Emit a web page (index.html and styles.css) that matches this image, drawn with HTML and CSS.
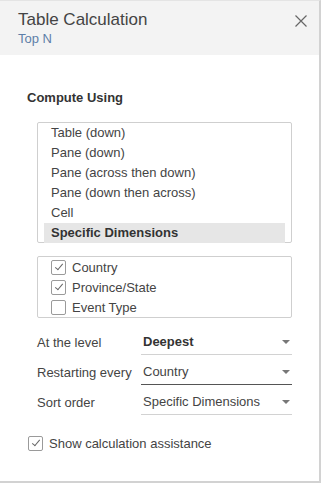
FILE: index.html
```html
<!DOCTYPE html>
<html lang="en">
<head>
    <meta charset="UTF-8">
    <meta name="viewport" content="width=device-width, initial-scale=1.0">
    <title>Table Calculation</title>
    <link rel="stylesheet" href="styles.css">
</head>
<body>

<div class="panel">
    <div class="header">
        <div>
            <div class="title">Table Calculation</div>
            <div class="subtitle">Top N</div>
        </div>
        <svg class="close" width="12" height="12" viewBox="0 0 12 12">
            <path d="M0.5 0.5 L11.5 11.5 M11.5 0.5 L0.5 11.5" stroke="#666" stroke-width="1.2" fill="none"/>
        </svg>
    </div>

    <div class="content">
        <h3>Compute Using</h3>

        <div class="listbox">
            <div class="item">Table (down)</div>
            <div class="item">Pane (down)</div>
            <div class="item">Pane (across then down)</div>
            <div class="item">Pane (down then across)</div>
            <div class="item">Cell</div>
            <div class="item selected">Specific Dimensions</div>
        </div>

        <div class="checklist">
            <label class="check"><span class="box checked"></span>Country</label>
            <label class="check"><span class="box checked"></span>Province/State</label>
            <label class="check"><span class="box"></span>Event Type</label>
        </div>

        <div class="fields">
            <div class="field">
                <span class="field-label">At the level</span>
                <div class="dropdown bold">Deepest<span class="arrow"></span></div>
            </div>
            <div class="field">
                <span class="field-label">Restarting every</span>
                <div class="dropdown active">Country<span class="arrow"></span></div>
            </div>
            <div class="field">
                <span class="field-label">Sort order</span>
                <div class="dropdown">Specific Dimensions<span class="arrow"></span></div>
            </div>
        </div>

        <label class="check assist"><span class="box checked"></span>Show calculation assistance</label>
    </div>
</div>

</body>
</html>
```

FILE: styles.css
```css
body {
    margin: 0;
    font-family: "Liberation Sans", Arial, sans-serif;
    color: #333;
    background: #fff;
}
.panel {
    width: 321px;
    height: 483px;
    box-sizing: border-box;
    border-right: 2px solid #d2d2d2;
    border-bottom: 2px solid #d2d2d2;
    border-top: 1px solid #e4e4e4;
}
.header {
    background-color: #f3f3f3;
    height: 54px;
    box-sizing: border-box;
    padding: 9px 12px 0 18px;
    display: flex;
    justify-content: space-between;
    align-items: flex-start;
}
.title {
    font-size: 17px;
    color: #444;
    line-height: 20px;
}
.subtitle {
    font-size: 13px;
    color: #5d7ea8;
    line-height: 16px;
    margin-top: 1px;
}
.close {
    margin-top: 5px;
}
.content {
    padding: 35px 0 0 27px;
}
h3 {
    margin: 0;
    font-size: 13px;
    font-weight: bold;
    line-height: 16px;
    color: #333;
}
.listbox {
    margin: 16px 0 0 10px;
    width: 255px;
    height: 121px;
    box-sizing: border-box;
    border: 1px solid #cfcfcf;
    border-radius: 2px;
    padding: 0 6px 0 6px;
}
.item {
    height: 20px;
    line-height: 20px;
    font-size: 13px;
    padding-left: 7px;
    color: #444;
}
.item.selected {
    background-color: #e6e6e6;
    font-weight: bold;
    color: #333;
}
.checklist {
    margin: 13px 0 0 10px;
    width: 255px;
    height: 62px;
    box-sizing: border-box;
    border: 1px solid #cfcfcf;
    border-radius: 2px;
    padding: 0 0 0 13px;
}
.check {
    display: flex;
    align-items: center;
    height: 20px;
    font-size: 13px;
    color: #444;
}
.box {
    width: 13px;
    height: 13px;
    border: 1px solid #9a9a9a;
    border-radius: 2px;
    margin-right: 6px;
    position: relative;
    background: #fff;
}
.box.checked::after {
    content: "";
    position: absolute;
    left: 4.5px;
    top: 1.5px;
    width: 3px;
    height: 7px;
    border-right: 1.3px solid #666;
    border-bottom: 1.3px solid #666;
    transform: rotate(40deg);
}
.fields {
    margin: 7px 0 0 10px;
    width: 255px;
}
.field {
    display: flex;
    align-items: flex-end;
    height: 30px;
    font-size: 13px;
}
.field-label {
    width: 104px;
    line-height: 24px;
    color: #444;
}
.dropdown {
    flex: 1;
    height: 24px;
    line-height: 23px;
    padding-left: 2px;
    border-bottom: 1px solid #d2d2d2;
    position: relative;
    color: #444;
}
.dropdown.bold {
    font-weight: bold;
    color: #333;
}
.dropdown.active {
    border-bottom-color: #555;
}
.arrow {
    position: absolute;
    right: 2px;
    top: 10px;
    border-left: 4px solid transparent;
    border-right: 4px solid transparent;
    border-top: 4px solid #777;
}
.assist {
    margin-top: 18px;
    margin-left: 1px;
}
```
